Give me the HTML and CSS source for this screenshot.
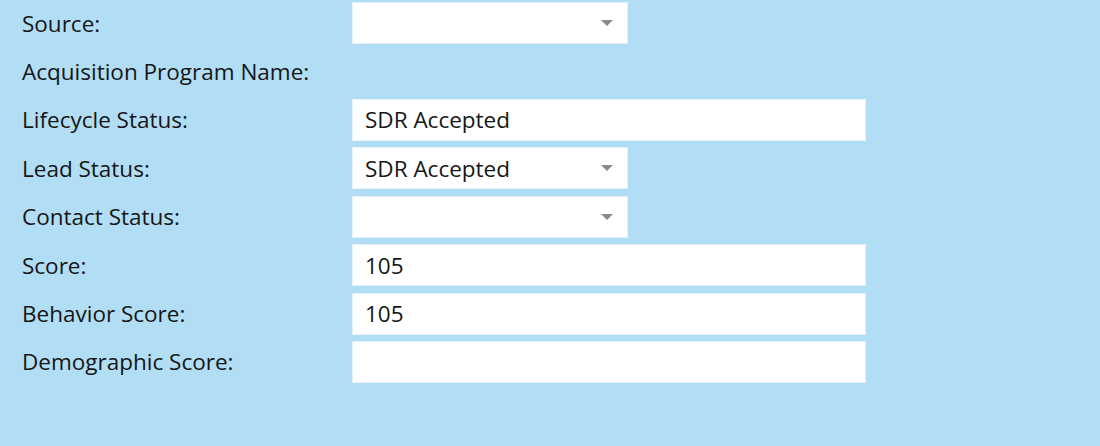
FILE: index.html
```html
<!DOCTYPE html>
<html>
<head>
<meta charset="utf-8">
<link rel="stylesheet" href="styles.css">
</head>
<body>
<div class="form">
  <div class="row"><div class="label">Source:</div><div class="field narrow select"><span class="val"></span><span class="arrow"></span></div></div>
  <div class="row"><div class="label">Acquisition Program Name:</div></div>
  <div class="row"><div class="label">Lifecycle Status:</div><div class="field wide"><span class="val">SDR Accepted</span></div></div>
  <div class="row"><div class="label">Lead Status:</div><div class="field narrow select"><span class="val">SDR Accepted</span><span class="arrow"></span></div></div>
  <div class="row"><div class="label">Contact Status:</div><div class="field narrow select"><span class="val"></span><span class="arrow"></span></div></div>
  <div class="row"><div class="label">Score:</div><div class="field wide"><span class="val">105</span></div></div>
  <div class="row"><div class="label">Behavior Score:</div><div class="field wide"><span class="val">105</span></div></div>
  <div class="row"><div class="label">Demographic Score:</div><div class="field wide"><span class="val"></span></div></div>
</div>
</body>
</html>
```
FILE: styles.css
```css
html, body {
  margin: 0;
  padding: 0;
  background: #b1ddf5;
  width: 1100px;
  height: 446px;
  overflow: hidden;
}
body {
  font-family: "Open Sans", "Noto Sans", sans-serif;
  color: #161616;
}
.form {
  padding-top: 2px;
  display: flex;
  flex-direction: column;
  gap: 6.43px;
}
.row {
  display: flex;
  align-items: center;
  height: 42px;
}
.label {
  width: 330px;
  padding-left: 22px;
  font-size: 22.5px;
  flex: none;
}
.field {
  height: 42px;
  box-sizing: border-box;
  background: #fff;
  border: 1px solid #e2f2fc;
  display: flex;
  align-items: center;
  padding: 0 12px;
  font-size: 22.5px;
}
.wide { width: 514px; }
.narrow { width: 276px; }
.val { flex: 1; }
.arrow {
  width: 0;
  height: 0;
  border-left: 6px solid transparent;
  border-right: 6px solid transparent;
  border-top: 6px solid #8a8a8a;
  margin-right: 2px;
}
```
